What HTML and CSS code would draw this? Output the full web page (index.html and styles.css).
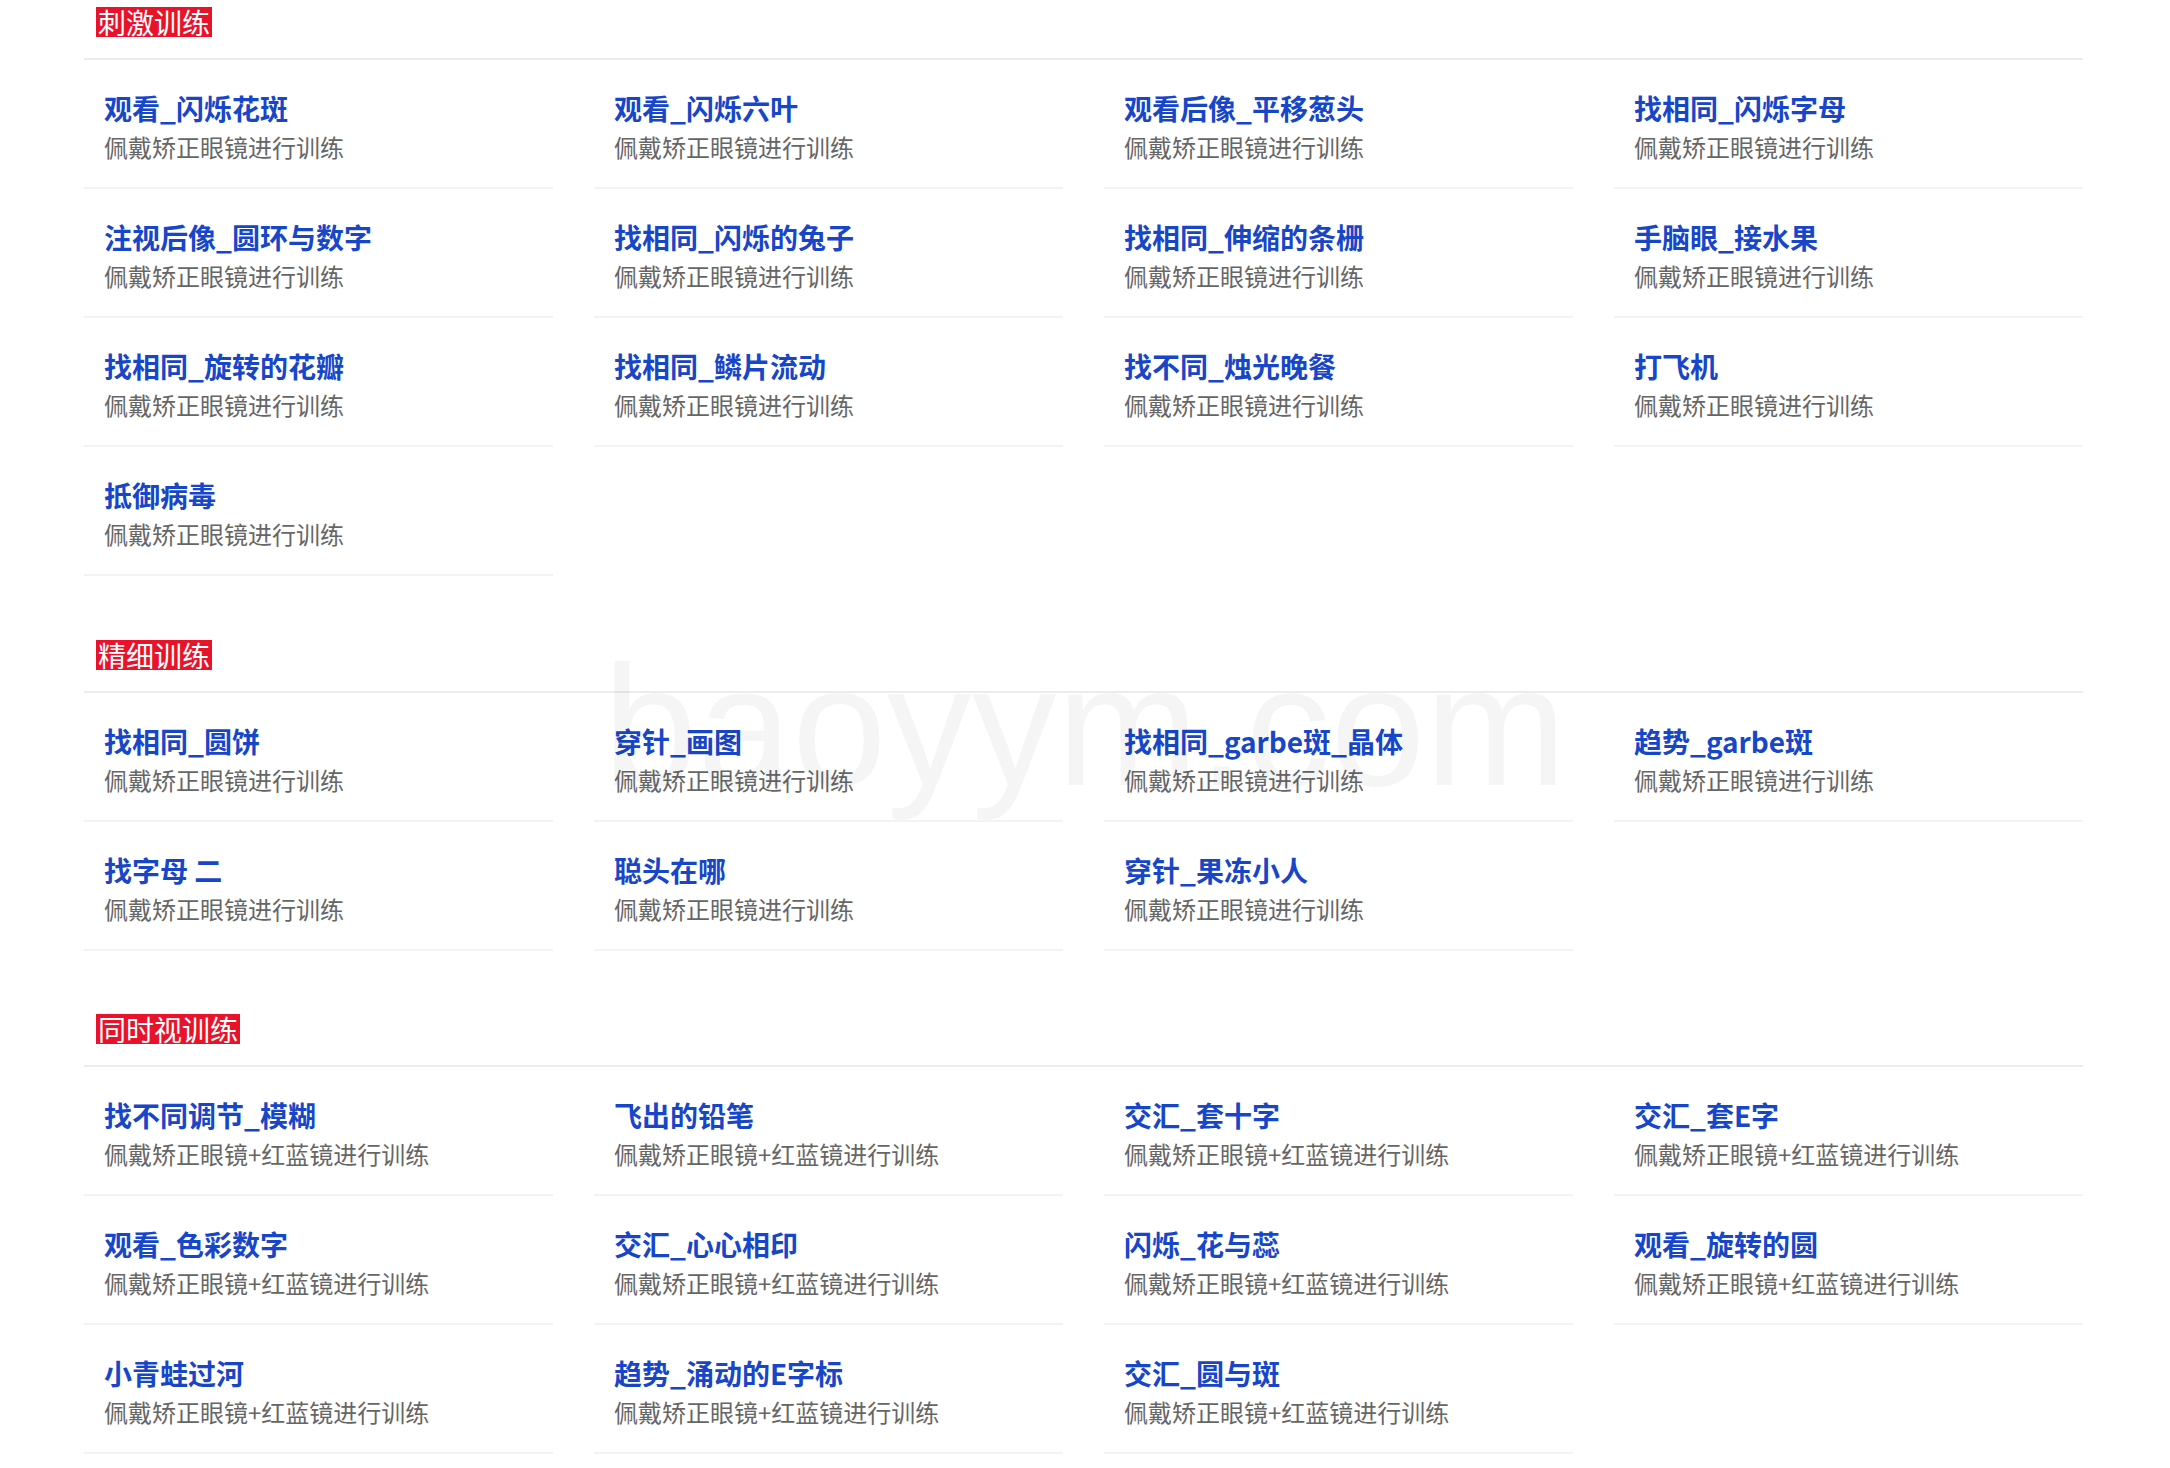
FILE: index.html
```html
<!DOCTYPE html>
<html lang="zh-CN">
<head>
<meta charset="utf-8">
<title>训练列表</title>
<link rel="stylesheet" href="styles.css">
</head>
<body>
<div class="page">
  <div class="watermark" aria-hidden="true">baoyym.com</div>

  <section class="section">
    <div class="section-head"><span class="label">刺激训练</span></div>
    <div class="grid">
      <div class="card"><div class="title">观看_闪烁花斑</div><div class="desc">佩戴矫正眼镜进行训练</div></div>
      <div class="card"><div class="title">观看_闪烁六叶</div><div class="desc">佩戴矫正眼镜进行训练</div></div>
      <div class="card"><div class="title">观看后像_平移葱头</div><div class="desc">佩戴矫正眼镜进行训练</div></div>
      <div class="card"><div class="title">找相同_闪烁字母</div><div class="desc">佩戴矫正眼镜进行训练</div></div>
      <div class="card"><div class="title">注视后像_圆环与数字</div><div class="desc">佩戴矫正眼镜进行训练</div></div>
      <div class="card"><div class="title">找相同_闪烁的兔子</div><div class="desc">佩戴矫正眼镜进行训练</div></div>
      <div class="card"><div class="title">找相同_伸缩的条栅</div><div class="desc">佩戴矫正眼镜进行训练</div></div>
      <div class="card"><div class="title">手脑眼_接水果</div><div class="desc">佩戴矫正眼镜进行训练</div></div>
      <div class="card"><div class="title">找相同_旋转的花瓣</div><div class="desc">佩戴矫正眼镜进行训练</div></div>
      <div class="card"><div class="title">找相同_鳞片流动</div><div class="desc">佩戴矫正眼镜进行训练</div></div>
      <div class="card"><div class="title">找不同_烛光晚餐</div><div class="desc">佩戴矫正眼镜进行训练</div></div>
      <div class="card"><div class="title">打飞机</div><div class="desc">佩戴矫正眼镜进行训练</div></div>
      <div class="card"><div class="title">抵御病毒</div><div class="desc">佩戴矫正眼镜进行训练</div></div>
    </div>
  </section>

  <section class="section section-2">
    <div class="section-head"><span class="label">精细训练</span></div>
    <div class="grid">
      <div class="card"><div class="title">找相同_圆饼</div><div class="desc">佩戴矫正眼镜进行训练</div></div>
      <div class="card"><div class="title">穿针_画图</div><div class="desc">佩戴矫正眼镜进行训练</div></div>
      <div class="card"><div class="title">找相同_garbe斑_晶体</div><div class="desc">佩戴矫正眼镜进行训练</div></div>
      <div class="card"><div class="title">趋势_garbe斑</div><div class="desc">佩戴矫正眼镜进行训练</div></div>
      <div class="card"><div class="title">找字母 二</div><div class="desc">佩戴矫正眼镜进行训练</div></div>
      <div class="card"><div class="title">聪头在哪</div><div class="desc">佩戴矫正眼镜进行训练</div></div>
      <div class="card"><div class="title">穿针_果冻小人</div><div class="desc">佩戴矫正眼镜进行训练</div></div>
    </div>
  </section>

  <section class="section section-3">
    <div class="section-head"><span class="label">同时视训练</span></div>
    <div class="grid">
      <div class="card"><div class="title">找不同调节_模糊</div><div class="desc">佩戴矫正眼镜+红蓝镜进行训练</div></div>
      <div class="card"><div class="title">飞出的铅笔</div><div class="desc">佩戴矫正眼镜+红蓝镜进行训练</div></div>
      <div class="card"><div class="title">交汇_套十字</div><div class="desc">佩戴矫正眼镜+红蓝镜进行训练</div></div>
      <div class="card"><div class="title">交汇_套E字</div><div class="desc">佩戴矫正眼镜+红蓝镜进行训练</div></div>
      <div class="card"><div class="title">观看_色彩数字</div><div class="desc">佩戴矫正眼镜+红蓝镜进行训练</div></div>
      <div class="card"><div class="title">交汇_心心相印</div><div class="desc">佩戴矫正眼镜+红蓝镜进行训练</div></div>
      <div class="card"><div class="title">闪烁_花与蕊</div><div class="desc">佩戴矫正眼镜+红蓝镜进行训练</div></div>
      <div class="card"><div class="title">观看_旋转的圆</div><div class="desc">佩戴矫正眼镜+红蓝镜进行训练</div></div>
      <div class="card"><div class="title">小青蛙过河</div><div class="desc">佩戴矫正眼镜+红蓝镜进行训练</div></div>
      <div class="card"><div class="title">趋势_涌动的E字标</div><div class="desc">佩戴矫正眼镜+红蓝镜进行训练</div></div>
      <div class="card"><div class="title">交汇_圆与斑</div><div class="desc">佩戴矫正眼镜+红蓝镜进行训练</div></div>
    </div>
  </section>
</div>
</body>
</html>
```

FILE: styles.css
```css
html, body {
  margin: 0;
  padding: 0;
  background: #ffffff;
}

body {
  font-family: "Noto Sans CJK SC", "Noto Sans", sans-serif;
}

.page {
  position: relative;
  width: 1999px;
  padding: 7px 0 0 84px;
}

.watermark {
  position: absolute;
  left: 603px;
  top: 641px;
  font-family: "Liberation Sans", Arial, sans-serif;
  font-size: 170px;
  line-height: 1;
  color: rgba(0, 0, 0, 0.04);
  pointer-events: none;
  white-space: nowrap;
}

.section-2 {
  margin-top: 64px;
}

.section-3 {
  margin-top: 63px;
}

.section-head {
  padding-left: 12px;
  padding-bottom: 21px;
  border-bottom: 2px solid #ececec;
}

.label {
  display: inline-block;
  background: #e8132b;
  color: #ffffff;
  font-size: 28px;
  line-height: 30px;
  padding: 0 2px;
  vertical-align: top;
}

.grid {
  display: grid;
  grid-template-columns: repeat(4, 469px);
  column-gap: 41px;
}

.card {
  padding: 30px 20px 24px 20px;
  border-bottom: 2px solid #f3f3f3;
}

.title {
  font-size: 28px;
  line-height: 36px;
  font-weight: 700;
  color: #1746c8;
  margin-bottom: 5px;
  white-space: nowrap;
}

.desc {
  font-size: 24px;
  line-height: 32px;
  color: #666666;
  white-space: nowrap;
}
```
